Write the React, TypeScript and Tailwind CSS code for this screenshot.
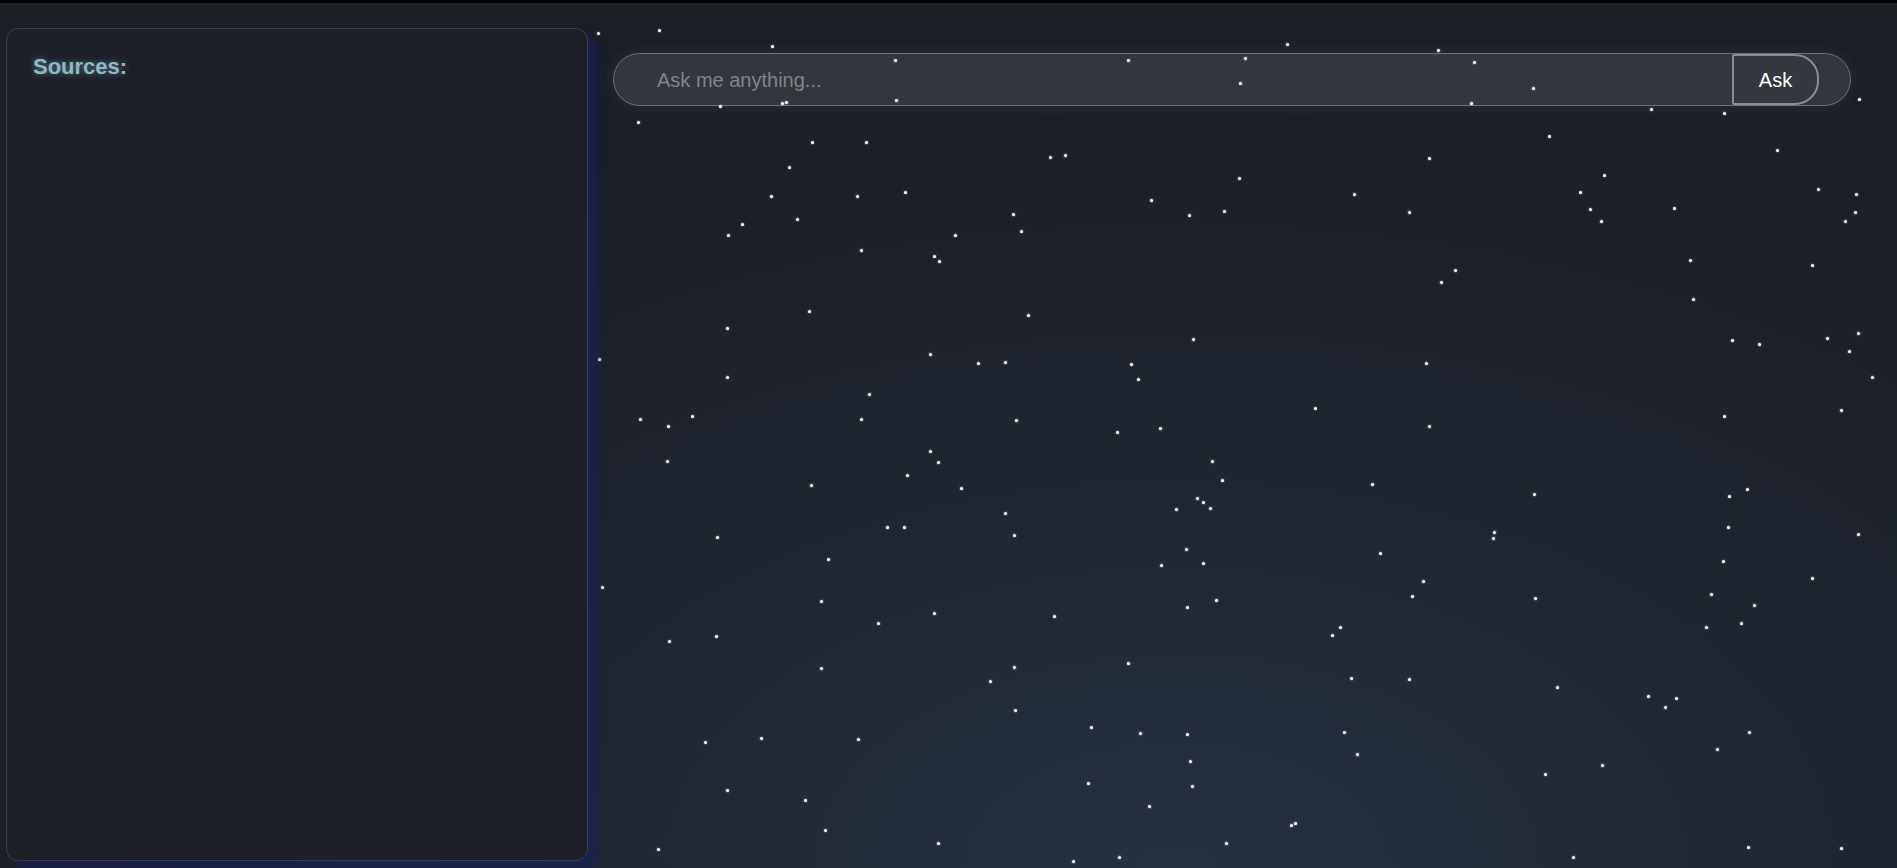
import { useState } from "react";

// star positions measured on the 1568px-wide preview, scaled up to the real page
const SCALE = 1897 / 1568;

const STARS: [number, number][] = [
  [494, 27], [545, 25], [638, 38], [740, 50], [932, 50], [1029, 48], [1064, 36], [1189, 41], [1218, 51],
  [1025, 69], [1267, 73], [595, 88], [650, 84], [646, 85], [741, 83], [1216, 85], [1365, 90], [1425, 93], [1537, 82],
  [527, 101], [1280, 112], [671, 117], [716, 117], [1469, 124], [868, 130], [880, 128], [1181, 131],
  [652, 138], [1326, 145], [1024, 147], [637, 162], [708, 162], [748, 159], [951, 165], [1119, 160], [1306, 159], [1503, 156], [1534, 160],
  [1314, 173], [1384, 172], [1165, 175], [837, 177], [983, 178], [1012, 174], [1533, 175],
  [613, 185], [659, 181], [1323, 183], [1525, 183], [844, 191], [602, 194], [789, 194],
  [712, 207], [772, 212], [776, 216], [1397, 215], [1498, 219], [1203, 223], [1191, 233],
  [1399, 247], [669, 257], [850, 260], [601, 271], [986, 280], [1432, 281], [1454, 284], [1510, 279], [1536, 275], [1528, 290],
  [495, 297], [769, 293], [808, 300], [831, 299], [935, 301], [1179, 300], [941, 313], [601, 312], [1547, 312],
  [718, 326], [1087, 337], [1522, 339], [529, 346], [572, 344], [712, 346], [840, 347], [1425, 344], [552, 352], [923, 357], [959, 354], [1181, 352],
  [769, 373], [775, 382], [1002, 381], [551, 381], [750, 393], [1010, 397], [794, 403], [670, 401], [1134, 400], [1268, 408], [1444, 404], [1429, 410],
  [989, 412], [994, 415], [1000, 420], [972, 421], [831, 424],
  [733, 436], [747, 436], [1428, 436], [1235, 440], [1234, 445], [838, 442], [593, 444], [1536, 441], [980, 454], [1141, 457], [684, 462], [994, 465], [960, 467], [1424, 464],
  [1176, 480], [1498, 478], [498, 485], [1167, 493], [1414, 491], [1269, 494], [679, 497], [1005, 496], [981, 502], [1450, 500], [772, 507], [871, 509],
  [726, 515], [1439, 515], [1108, 518], [1410, 518], [1101, 525], [592, 526], [553, 530],
  [932, 548], [838, 551], [679, 552], [1117, 560], [1165, 561], [818, 563], [1287, 568], [1362, 575], [1385, 577], [1376, 584], [839, 587],
  [902, 601], [942, 606], [981, 607], [1111, 605], [1446, 605], [583, 613], [629, 610], [709, 611], [1419, 619], [1122, 623], [984, 629], [1324, 632], [1277, 640],
  [899, 647], [985, 650], [601, 653], [665, 661], [950, 666], [1070, 680], [1067, 682], [682, 686], [775, 697], [1013, 697], [1445, 700], [1522, 701],
  [544, 702], [887, 712], [925, 708], [1300, 708],
];

function Starfield() {
  return (
    <div className="pointer-events-none absolute inset-0 z-10">
      {STARS.map(([x, y], i) => (
        <span
          key={i}
          className="absolute h-[3px] w-[3px] rounded-full bg-white shadow-[0_0_2px_rgba(255,255,255,0.8)]"
          style={{ left: Math.round(x * SCALE) - 1, top: Math.round(y * SCALE) - 1 }}
        />
      ))}
    </div>
  );
}

export default function App() {
  const [question, setQuestion] = useState("");

  return (
    <div
      className="relative flex h-[868px] w-full flex-col overflow-hidden bg-[radial-gradient(ellipse_70%_90%_at_62%_100%,#253040_0%,#1f252f_55%,#1b1f26_100%)]"
      style={{ fontFamily: '"Liberation Sans", Arial, sans-serif' }}
    >
      {/* thin black strip at the very top */}
      <div className="h-[3px] w-full shrink-0 bg-black" />

      <div className="flex min-h-0 flex-1 pl-[6px] pt-[25px] pb-[7px]">
        {/* Sources panel */}
        <aside className="relative z-20 w-[582px] shrink-0 rounded-[12px] border border-[#3a3f48] bg-[#1d2028] px-[26px] pt-[25px] shadow-[9px_8px_8px_rgba(26,32,92,0.75)]">
          <h2 className="text-[22px] font-bold leading-[25px] text-[#8bbac6] [text-shadow:0_0_6px_rgba(139,186,198,0.55)]">
            Sources:
          </h2>
        </aside>

        {/* main area */}
        <main className="flex-1 pl-[25px] pr-[46px] pt-[25px]">
          <form
            className="flex h-[53px] items-stretch rounded-full border border-[#6e7276] bg-[#33373d] pr-[31px] shadow-[0_0_16px_rgba(255,255,255,0.07)]"
            onSubmit={(e) => e.preventDefault()}
          >
            <input
              value={question}
              onChange={(e) => setQuestion(e.target.value)}
              placeholder="Ask me anything..."
              className="min-w-0 flex-1 bg-transparent pl-[43px] text-[20px] text-white outline-none placeholder:text-[#818488]"
            />
            <button
              type="submit"
              className="w-[87px] rounded-r-[24px] rounded-l-[2px] border-2 border-[#8b8d90] bg-[#34383e] text-[20px] text-white"
            >
              Ask
            </button>
          </form>
        </main>
      </div>

      <Starfield />
    </div>
  );
}
